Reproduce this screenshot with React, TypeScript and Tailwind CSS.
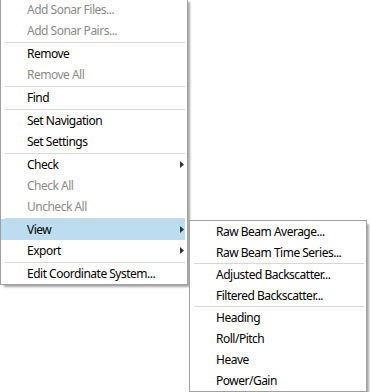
import React from "react";

type Item = { t: string; d?: boolean; arrow?: boolean; hl?: boolean } | "sep";

const mainItems: Item[] = [
  { t: "Add Sonar Files...", d: true },
  { t: "Add Sonar Pairs...", d: true },
  "sep",
  { t: "Remove" },
  { t: "Remove All", d: true },
  "sep",
  { t: "Find" },
  "sep",
  { t: "Set Navigation" },
  { t: "Set Settings" },
  "sep",
  { t: "Check", arrow: true },
  { t: "Check All", d: true },
  { t: "Uncheck All", d: true },
  "sep",
  { t: "View", arrow: true, hl: true },
  { t: "Export", arrow: true },
  "sep",
  { t: "Edit Coordinate System..." },
];

const subItems: Item[] = [
  { t: "Raw Beam Average..." },
  { t: "Raw Beam Time Series..." },
  "sep",
  { t: "Adjusted Backscatter..." },
  { t: "Filtered Backscatter..." },
  "sep",
  { t: "Heading" },
  { t: "Roll/Pitch" },
  { t: "Heave" },
  { t: "Power/Gain" },
];

function Arrow() {
  return (
    <svg width="4" height="7" viewBox="0 0 4 7" className="absolute right-[1px] top-[7px]">
      <path d="M0 0 L4 3.5 L0 7 Z" fill="#333333" />
    </svg>
  );
}

function MenuList({ items, thinSep }: { items: Item[]; thinSep?: boolean }) {
  return (
    <div className="flex flex-col">
      {items.map((it, i) =>
        it === "sep" ? (
          <div key={i} className={(thinSep ? "h-px" : "h-[2px]") + " flex flex-col justify-end"}>
            <div className="h-px bg-[#d7d7d7] ml-[4px] mr-[2px]" />
          </div>
        ) : (
          <div
            key={i}
            className={
              "relative h-[21px] flex items-center pl-[26px] mr-[2px] text-[12px] tracking-[-0.5px] " +
              (it.hl ? "bg-[#bcdcef] " : "") +
              (it.d ? "text-[#8a8a8a]" : "text-[#000000]")
            }
          >
            <span className="whitespace-nowrap">{it.t}</span>
            {it.arrow && <Arrow />}
          </div>
        )
      )}
    </div>
  );
}

export default function App() {
  return (
    <div
      className="relative w-[370px] h-[392px] bg-white overflow-hidden"
      style={{ fontFamily: '"Noto Sans", "Open Sans", sans-serif' }}
    >
      <div className="absolute left-0 top-[-2px] w-[188px] bg-white border border-[#a0a0a0] shadow-[3px_3px_2px_-1px_rgba(0,0,0,0.35)]">
        <MenuList items={mainItems} />
      </div>
      <div className="absolute left-[189px] top-[220px] w-[178px] bg-white border border-[#a0a0a0] shadow-[3px_3px_2px_-1px_rgba(0,0,0,0.35)]">
        <MenuList items={subItems} thinSep />
      </div>
    </div>
  );
}
